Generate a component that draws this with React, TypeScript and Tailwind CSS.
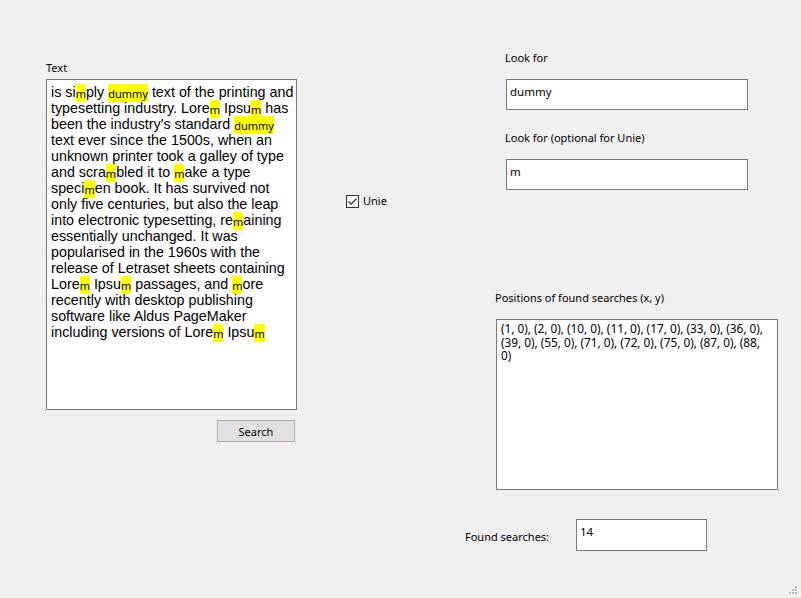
import React from "react"

const ui = { fontFamily: '"Noto Sans", "Open Sans", sans-serif' }
const arial = { fontFamily: '"Liberation Sans", Arial, sans-serif' }

function Hl({ children }: { children: React.ReactNode }) {
  return (
    <span className="bg-[#ffff00] py-[1.5px] text-[11px]" style={ui}>
      {children}
    </span>
  )
}

const lines: React.ReactNode[] = [
  <>is si<Hl>m</Hl>ply <Hl>dummy</Hl> text of the printing and</>,
  <>typesetting industry. Lore<Hl>m</Hl> Ipsu<Hl>m</Hl> has</>,
  <>been the industry's standard <Hl>dummy</Hl></>,
  <>text ever since the 1500s, when an</>,
  <>unknown printer took a galley of type</>,
  <>and scra<Hl>m</Hl>bled it to <Hl>m</Hl>ake a type</>,
  <>speci<Hl>m</Hl>en book. It has survived not</>,
  <>only five centuries, but also the leap</>,
  <>into electronic typesetting, re<Hl>m</Hl>aining</>,
  <>essentially unchanged. It was</>,
  <>popularised in the 1960s with the</>,
  <>release of Letraset sheets containing</>,
  <>Lore<Hl>m</Hl> Ipsu<Hl>m</Hl> passages, and <Hl>m</Hl>ore</>,
  <>recently with desktop publishing</>,
  <>software like Aldus PageMaker</>,
  <>including versions of Lore<Hl>m</Hl> Ipsu<Hl>m</Hl></>,
]

const positions = [
  "(1, 0), (2, 0), (10, 0), (11, 0), (17, 0), (33, 0), (36, 0),",
  "(39, 0), (55, 0), (71, 0), (72, 0), (75, 0), (87, 0), (88,",
  "0)",
]

function Field({ value, className }: { value: string; className: string }) {
  return (
    <div
      className={`border border-[#7a7a7a] bg-white px-[3px] pt-[4px] text-[11.5px] leading-[16px] text-black ${className}`}
      style={ui}
    >
      {value}
    </div>
  )
}

export default function App() {
  return (
    <div className="relative h-[598px] w-[801px] overflow-hidden bg-[#f0f0f0] text-[11px] text-black" style={ui}>
      <div className="flex">
        {/* left column */}
        <div className="ml-[46px] flex w-[251px] flex-col pt-[60px]">
          <div className="h-[19px] leading-[16px]">Text</div>
          <div
            className="h-[331px] w-[251px] border border-[#7a7a7a] bg-white px-[4px] pt-[4px] text-[14.3px] leading-[16px]"
            style={arial}
          >
            {lines.map((l, i) => (
              <div key={i} className="h-[16px] whitespace-nowrap">
                {l}
              </div>
            ))}
          </div>
          <div className="mt-[10px] flex justify-end pr-[2px]">
            <button className="flex h-[22px] w-[78px] items-center justify-center border border-[#adadad] bg-[#e1e1e1] pt-[1px] leading-none">
              Search
            </button>
          </div>
        </div>

        {/* middle column */}
        <div className="ml-[49px] w-[119px] pt-[194px]">
          <div className="flex items-center gap-[4px]">
            <div className="flex h-[13px] w-[13px] items-center justify-center border border-[#333333] bg-white">
              <svg width="11" height="11" viewBox="0 0 11 11">
                <path d="M1.5 5.5 L4.2 8.2 L9.5 2.5" fill="none" stroke="#333333" strokeWidth="1.2" />
              </svg>
            </div>
            <span className="leading-[14px]">Unie</span>
          </div>
        </div>

        {/* right column */}
        <div className="flex flex-col pt-[50px]">
          <div className="ml-[40px] h-[16px] leading-[16px]">Look for</div>
          <Field value="dummy" className="ml-[41px] mt-[13px] h-[31px] w-[242px]" />
          <div className="ml-[40px] mt-[20px] h-[16px] leading-[16px]">Look for (optional for Unie)</div>
          <Field value="m" className="ml-[41px] mt-[13px] h-[31px] w-[242px]" />
          <div className="ml-[30px] mt-[100px] h-[16px] leading-[16px]">Positions of found searches (x, y)</div>
          <div
            className="ml-[31px] mt-[13px] h-[171px] w-[282px] border border-[#7a7a7a] bg-white px-[4px] pt-[2px] text-[11.8px] leading-[13.5px]"
            style={ui}
          >
            {positions.map((p, i) => (
              <div key={i} className="whitespace-nowrap">
                {p}
              </div>
            ))}
          </div>
          <div className="mt-[29px] flex items-center">
            <span className="w-[111px] pt-[4px] leading-[16px]">Found searches:</span>
            <Field value="14" className="h-[32px] w-[131px]" />
          </div>
        </div>
      </div>

      {/* size grip */}
      <svg className="absolute bottom-[3px] right-[3px]" width="9" height="9" viewBox="0 0 9 9">
        <g fill="#b8b8b8">
          <rect x="6" y="0" width="2" height="2" />
          <rect x="3" y="3" width="2" height="2" />
          <rect x="6" y="3" width="2" height="2" />
          <rect x="0" y="6" width="2" height="2" />
          <rect x="3" y="6" width="2" height="2" />
          <rect x="6" y="6" width="2" height="2" />
        </g>
      </svg>
    </div>
  )
}
